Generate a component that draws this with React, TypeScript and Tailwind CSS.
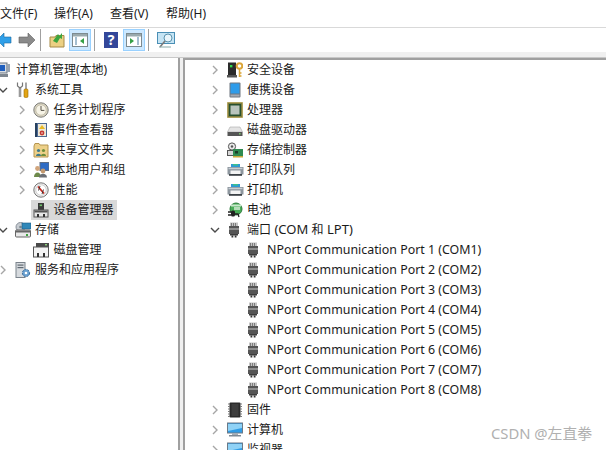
import type { ReactNode } from "react";

const FONT = '"Noto Sans", "Noto Sans CJK SC", sans-serif';

function Svg({ children, w = 16, h = 16 }: { children: ReactNode; w?: number; h?: number }) {
  return (
    <svg width={w} height={h} viewBox={`0 0 ${w} ${h}`} className="shrink-0 block">
      {children}
    </svg>
  );
}

function Chevron({ open }: { open?: boolean }) {
  return (
    <svg width="10" height="10" viewBox="0 0 10 10" className="shrink-0 block">
      {open ? (
        <path d="M1 3 L5 7 L9 3" fill="none" stroke="#4a4a4a" strokeWidth="1.4" />
      ) : (
        <path d="M3 1 L7 5 L3 9" fill="none" stroke="#a6a6a6" strokeWidth="1.4" />
      )}
    </svg>
  );
}

// tree icons
const PortIcon = () => (
  <Svg w={14} h={16}>
    <rect x="3" y="0.5" width="8" height="3.5" fill="#c4c4c4" />
    <path d="M4.5 1v3M6.5 1v3M8.5 1v3" stroke="#6a6a6a" strokeWidth="0.8" />
    <rect x="2" y="4" width="10" height="8" fill="#555" />
    <rect x="2" y="6" width="10" height="2" fill="#8e8e8e" />
    <rect x="3" y="12" width="8" height="1.5" fill="#3c3c3c" />
    <rect x="4.5" y="13.5" width="1.8" height="2" fill="#333" />
    <rect x="7.7" y="13.5" width="1.8" height="2" fill="#333" />
  </Svg>
);

const ComputerMgmt = () => (
  <Svg>
    <rect x="-3" y="1" width="14" height="10" fill="#d8dde4" stroke="#6b7480" />
    <rect x="-1" y="3" width="10" height="6" fill="#1f5fbf" />
    <rect x="10" y="2" width="4" height="8" fill="#9aa4b0" />
    <rect x="-3" y="12" width="15" height="3" fill="#7f8790" />
  </Svg>
);

const Tools = () => (
  <Svg>
    <path d="M5 5v10" stroke="#9a9a9a" strokeWidth="2.6" />
    <path d="M2.5 0.5v3.5l2.5 2 2.5-2v-3.5" fill="none" stroke="#777" strokeWidth="1.2" />
    <rect x="10" y="0.5" width="2" height="6.5" fill="#a5a5a5" />
    <rect x="9" y="7" width="4" height="8.5" rx="1.2" fill="#e2a414" stroke="#9c6d06" strokeWidth="0.6" />
  </Svg>
);

const Clock = () => (
  <Svg>
    <circle cx="8" cy="8" r="7.2" fill="#d9d4c2" stroke="#7d7d78" />
    <circle cx="8" cy="8" r="5.2" fill="#f6f3e6" stroke="#b3ad96" strokeWidth="0.6" />
    <path d="M8 4v4.4h3.4" fill="none" stroke="#58534a" strokeWidth="1" />
  </Svg>
);

const EventViewer = () => (
  <Svg>
    <rect x="2" y="1" width="12" height="14" fill="#4d6a94" />
    <rect x="2" y="1" width="2" height="14" fill="#27405f" />
    <rect x="5" y="2" width="8" height="12" fill="#efe9d6" />
    <path d="M9 3 L12 7 L6 7 Z" fill="#e8b923" />
    <circle cx="9" cy="11" r="2.4" fill="#c53a32" />
    <rect x="8.2" y="10.5" width="1.6" height="1" fill="#fff" />
  </Svg>
);

const SharedFolder = () => (
  <Svg>
    <path d="M1 4 L1 15 L15 15 L15 3 L7 3 L6 1.5 L2 1.5 Z" fill="#edd089" stroke="#b59550" />
    <circle cx="5.5" cy="8.5" r="1.6" fill="#3e7a8c" />
    <path d="M3 14c0-3 5-3 5 0z" fill="#3e7a8c" />
    <circle cx="10.5" cy="8.5" r="1.6" fill="#6d8e3c" />
    <path d="M8 14c0-3 5-3 5 0z" fill="#6d8e3c" />
  </Svg>
);

const LocalUsers = () => (
  <Svg>
    <rect x="7" y="0.5" width="9" height="8" fill="#2f6cc4" stroke="#5f6e85" />
    <circle cx="4.5" cy="6.5" r="2.4" fill="#d1a57c" />
    <path d="M1 15c0-6 7-6 7 0z" fill="#6e8a4a" />
    <circle cx="10" cy="9" r="2.4" fill="#c49a70" />
    <path d="M6 15.5c0-5 8-5 8 0z" fill="#6b6f76" />
  </Svg>
);

const Perf = () => (
  <Svg>
    <circle cx="8" cy="8" r="7.2" fill="#ececec" stroke="#777" />
    <circle cx="8" cy="8" r="5.2" fill="#fff" stroke="#bbb" strokeWidth="0.6" />
    <path d="M5 4.5 L11 11.5" stroke="#c8241c" strokeWidth="1.8" />
    <path d="M5.5 8.5 L7 4 M10.5 7.5 L9 12" stroke="#333" strokeWidth="0.9" />
  </Svg>
);

const DeviceMgr = () => (
  <Svg>
    <rect x="5" y="1" width="6" height="7" fill="#3a3a3a" />
    <rect x="6.6" y="2.5" width="2.4" height="1.6" fill="#6fc46a" />
    <rect x="1" y="8" width="14" height="7" fill="#e6e6e6" stroke="#555" />
    <rect x="1.5" y="8.5" width="13" height="2" fill="#555" />
    <rect x="4" y="12" width="2" height="3" fill="#333" />
    <rect x="10" y="12" width="2" height="3" fill="#333" />
  </Svg>
);

const Storage = () => (
  <Svg>
    <circle cx="5.5" cy="5" r="4.5" fill="#c7ccd1" stroke="#88909a" />
    <circle cx="5.5" cy="5" r="1.3" fill="#7c8791" />
    <rect x="7" y="1" width="9" height="6" fill="#2f87b8" stroke="#1a5d87" strokeWidth="0.6" />
    <rect x="0.5" y="8" width="15" height="7" rx="1" fill="#e8e8e8" stroke="#666" />
    <rect x="1" y="8.5" width="14" height="2" fill="#666" />
    <rect x="11" y="12" width="2" height="2" fill="#3da23d" />
  </Svg>
);

const DiskMgmt = () => (
  <Svg>
    <rect x="3" y="1" width="13" height="4" fill="#4a4a4a" />
    <rect x="12" y="2" width="2" height="1.4" fill="#8cd07e" />
    <rect x="0.5" y="5" width="15" height="10" fill="#f4f4f4" stroke="#555" />
    <rect x="4" y="11" width="2" height="4" fill="#333" />
    <rect x="10" y="11" width="2" height="4" fill="#333" />
  </Svg>
);

const Services = () => (
  <Svg>
    <rect x="1" y="0.5" width="9" height="15" fill="#d6dade" stroke="#7b838c" />
    <rect x="2.5" y="2.5" width="6" height="1.2" fill="#616a73" />
    <rect x="2.5" y="5" width="6" height="1.2" fill="#616a73" />
    <circle cx="11" cy="11" r="3.6" fill="#6aa0d0" stroke="#3d6f9d" strokeDasharray="2 1" />
    <circle cx="11" cy="11" r="1.3" fill="#fff" />
  </Svg>
);

const SecurityDev = () => (
  <Svg>
    <rect x="1" y="0.5" width="8" height="14" fill="#2b2b2b" />
    <rect x="3" y="3" width="2.4" height="2.4" fill="#32d84a" />
    <rect x="0" y="13" width="10" height="2.5" fill="#555" />
    <circle cx="12.5" cy="4" r="2.8" fill="none" stroke="#dba63a" strokeWidth="2" />
    <path d="M12.5 7v8M12.5 11h2M12.5 14h2" stroke="#dba63a" strokeWidth="1.5" />
  </Svg>
);

const Portable = () => (
  <Svg>
    <rect x="2.5" y="0.5" width="11" height="15" rx="1" fill="#6f7680" />
    <rect x="3.5" y="1.5" width="9" height="10" fill="#2e9cea" />
    <rect x="3.5" y="12.5" width="9" height="2" fill="#a4aab2" />
  </Svg>
);

const Cpu = () => (
  <Svg>
    <rect x="0.5" y="0.5" width="15" height="15" fill="#7d7c3e" stroke="#a78a24" strokeDasharray="1 1" />
    <rect x="2" y="2" width="12" height="12" fill="#27502f" />
    <rect x="3.5" y="3.5" width="9" height="9" fill="#b9c4bd" />
  </Svg>
);

const DiskDrive = () => (
  <Svg>
    <path d="M3 5h10l2.5 5h-15z" fill="#e4e4e4" stroke="#aaa" strokeWidth="0.6" />
    <rect x="0.5" y="10" width="15" height="4" fill="#555" />
    <rect x="12" y="11.2" width="1.6" height="1.2" fill="#7fdc6e" />
  </Svg>
);

const StorageCtl = () => (
  <Svg>
    <circle cx="5" cy="4.5" r="3.6" fill="#e8e8e8" stroke="#555" />
    <circle cx="5" cy="4.5" r="1.2" fill="#555" />
    <rect x="0.5" y="8.5" width="7" height="5" fill="#d8d8d8" stroke="#555" />
    <rect x="6" y="7" width="10" height="7" fill="#2f8a50" />
    <rect x="8" y="9" width="3" height="2.5" fill="#1a3d28" />
    <rect x="6" y="14" width="10" height="1.5" fill="#c9a83a" />
  </Svg>
);

// flat office printer: coloured sheet on top, grey body, dark tray
const Printer = () => (
  <Svg w={17} h={16}>
    <rect x="4" y="2" width="9" height="3" fill="#2f9ad6" />
    <rect x="6" y="2" width="5" height="1.5" fill="#3fc28a" />
    <rect x="0.5" y="5" width="16" height="7.5" fill="#8d969e" />
    <rect x="1.5" y="5.8" width="14" height="1.4" fill="#c6ced4" />
    <rect x="3.5" y="8.5" width="10" height="4.5" fill="#f4f4f4" />
    <rect x="2" y="12" width="13" height="1.8" fill="#3d4348" />
  </Svg>
);

const Battery = () => (
  <Svg>
    <circle cx="9" cy="7" r="6" fill="#48ad57" stroke="#2c7c3b" />
    <path d="M4 3.5h10" stroke="#c9e8cc" strokeWidth="2" />
    <path d="M7 5h6v3H7z" fill="#b5ddb9" />
    <path d="M1 10h3M1 13h3" stroke="#222" strokeWidth="1.4" />
    <rect x="4" y="8.5" width="4" height="6" rx="1.5" fill="#222" />
    <path d="M8 12h3l1 3" fill="none" stroke="#222" strokeWidth="1.3" />
  </Svg>
);

const Firmware = () => (
  <Svg>
    <rect x="2.5" y="0.5" width="11" height="15" rx="1" fill="#2a2a2a" />
    <path d="M1 2h2M1 4.5h2M1 7h2M1 9.5h2M1 12h2M1 14.5h2M13 2h2M13 4.5h2M13 7h2M13 9.5h2M13 12h2M13 14.5h2" stroke="#7b7b7b" strokeWidth="1" />
    <rect x="4.5" y="2" width="7" height="12" fill="#3d3d3d" />
  </Svg>
);

const Monitor = () => (
  <Svg>
    <rect x="0.5" y="1" width="15" height="10" fill="#2f9ce6" stroke="#6c7986" />
    <path d="M1 2h14v4L1 9z" fill="#8fd2f6" />
    <rect x="5" y="11" width="6" height="2" fill="#a4adb6" />
    <rect x="2" y="13" width="12" height="1.5" fill="#7f8a95" />
  </Svg>
);

type TreeRow = { label: string; icon: ReactNode; indent: number; arrow?: "open" | "closed"; active?: boolean };

const LEFT: TreeRow[] = [
  { label: "计算机管理(本地)", icon: <ComputerMgmt />, indent: 0 },
  { label: "系统工具", icon: <Tools />, indent: 1, arrow: "open" },
  { label: "任务计划程序", icon: <Clock />, indent: 2, arrow: "closed" },
  { label: "事件查看器", icon: <EventViewer />, indent: 2, arrow: "closed" },
  { label: "共享文件夹", icon: <SharedFolder />, indent: 2, arrow: "closed" },
  { label: "本地用户和组", icon: <LocalUsers />, indent: 2, arrow: "closed" },
  { label: "性能", icon: <Perf />, indent: 2, arrow: "closed" },
  { label: "设备管理器", icon: <DeviceMgr />, indent: 2, active: true },
  { label: "存储", icon: <Storage />, indent: 1, arrow: "open" },
  { label: "磁盘管理", icon: <DiskMgmt />, indent: 2 },
  { label: "服务和应用程序", icon: <Services />, indent: 1, arrow: "closed" },
];

const RIGHT_TOP: [string, ReactNode][] = [
  ["安全设备", <SecurityDev />],
  ["便携设备", <Portable />],
  ["处理器", <Cpu />],
  ["磁盘驱动器", <DiskDrive />],
  ["存储控制器", <StorageCtl />],
  ["打印队列", <Printer />],
  ["打印机", <Printer />],
  ["电池", <Battery />],
];

const PORTS = [1, 2, 3, 4, 5, 6, 7, 8];

function LeftRow({ row }: { row: TreeRow }) {
  if (row.indent === 0) {
    return (
      <div className="flex h-5 items-center">
        <div className="-ml-[4px]">{row.icon}</div>
        <span className="ml-[4px] text-[12px] text-[#1a1a1a]">{row.label}</span>
      </div>
    );
  }
  const isChild = row.indent === 2;
  return (
    <div className={`flex h-5 items-center ${isChild ? "pl-[17px]" : "-ml-[2px]"}`}>
      <div className={`shrink-0 ${isChild ? "w-[14px]" : "w-[16px]"}`}>
        {row.arrow && <Chevron open={row.arrow === "open"} />}
      </div>
      <div className={`flex h-5 items-center ${row.active ? "bg-[#d9d9d9]" : ""} ${isChild ? "pl-[2px] pr-[3px]" : "pl-[1px]"}`}>
        {row.icon}
        <span className={`text-[12px] text-[#1a1a1a] ${isChild ? "ml-[4.5px]" : "ml-[4px]"}`}>{row.label}</span>
      </div>
    </div>
  );
}

function RightRow({ label, icon, open }: { label: ReactNode; icon: ReactNode; open?: boolean }) {
  return (
    <div className="flex h-5 items-center pl-[25px]">
      <div className="w-[17px] shrink-0">
        <Chevron open={open} />
      </div>
      <div className="w-[16px] shrink-0">{icon}</div>
      <span className="ml-[4px] whitespace-pre text-[12px] text-[#1a1a1a]">{label}</span>
    </div>
  );
}

function ToolBtn({ children }: { children: ReactNode }) {
  return (
    <div className="flex h-[22px] w-[22px] items-center justify-center border border-[#99d1ff] bg-[#cce8ff]">
      {children}
    </div>
  );
}

const Sep = () => <div className="mx-[3px] h-[22px] w-px bg-[#a0a0a0]" />;

const Pane = ({ play }: { play: "left" | "right" }) => (
  <Svg>
    <rect x="0.5" y="1.5" width="15" height="13" fill="#fff" stroke="#7d8a8f" />
    <rect x="1" y="2" width="14" height="2.5" fill="#9aa9ad" />
    {play === "left" ? (
      <>
        <path d="M3 6h2M3 8h2M3 10h2M3 12h2" stroke="#4a7ca0" strokeWidth="1" />
        <path d="M12 6v6L8 9z" fill="#35a045" />
      </>
    ) : (
      <>
        <path d="M11 6h2M11 8h2M11 10h2M11 12h2" stroke="#4a7ca0" strokeWidth="1" />
        <path d="M4 6v6l4-3z" fill="#35a045" />
      </>
    )}
  </Svg>
);

export default function App() {
  return (
    <div className="flex h-[450px] w-[606px] flex-col overflow-hidden bg-white" style={{ fontFamily: FONT }}>
      <div className="flex h-[28px] items-center border-b border-[#d9d9d9] text-[12px] text-[#1a1a1a]">
        <span className="w-[54px]">文件(F)</span>
        <span className="w-[56px]">操作(A)</span>
        <span className="w-[56px]">查看(V)</span>
        <span>帮助(H)</span>
      </div>

      <div className="flex h-[24px] items-center">
        <svg width="12" height="16" viewBox="0 0 12 16" className="block shrink-0">
          <path d="M-3 8l7-7v4h7v6H4v4z" fill="#2f9fe8" stroke="#17689f" strokeWidth="0.6" />
        </svg>
        <svg width="18" height="16" viewBox="0 0 18 16" className="ml-[6px] block shrink-0">
          <path d="M17 8l-7-7v4H1v6h9v4z" fill="#8a8a8a" stroke="#5e5e5e" strokeWidth="0.6" />
        </svg>
        <div className="mx-[4px] h-[22px] w-px bg-[#a0a0a0]" />
        <div className="ml-[4px] flex items-center gap-[4px]">
          <Svg>
            <path d="M1 5h5l1-1.5h8V15H1z" fill="#ecd083" stroke="#a68a46" />
            <path d="M4 9l5-7 1.5 2L13 1v6l-2-1-3 5z" fill="#3ea53e" />
          </Svg>
          <ToolBtn>
            <Pane play="left" />
          </ToolBtn>
        </div>
        <Sep />
        <div className="ml-[6px] flex items-center gap-[5px]">
          <div className="flex h-[16px] w-[14px] items-center justify-center bg-[#33479a] text-[14px] font-bold leading-none text-white">?</div>
          <ToolBtn>
            <Pane play="right" />
          </ToolBtn>
        </div>
        <Sep />
        <svg width="18" height="17" viewBox="0 0 18 17" className="ml-[5px] block shrink-0">
          <rect x="0.5" y="0.5" width="17" height="11" fill="#c5e4f4" stroke="#4a8fb5" />
          <circle cx="11" cy="6" r="4" fill="#e8f5fb" stroke="#5b93ae" />
          <path d="M8 9l-5 6" stroke="#7a7a7a" strokeWidth="1.6" />
          <path d="M2 15h12" stroke="#8aa" strokeWidth="1" />
        </svg>
      </div>

      <div className="h-[6px] border-b border-[#c8c8c8] bg-[#f0f0f0]" />

      <div className="flex min-h-0 flex-1">
        <div className="w-[180px] shrink-0 overflow-hidden border-r-2 border-[#a0a0a0] pt-[2px]">
          {LEFT.map((row) => (
            <LeftRow key={row.label} row={row} />
          ))}
        </div>
        <div className="w-[3px] shrink-0 bg-[#f0f0f0]" />
        <div className="relative min-w-0 flex-1 overflow-hidden border-l-2 border-t-2 border-[#a0a0a0]">
          {RIGHT_TOP.map(([label, icon]) => (
            <RightRow key={label} label={label} icon={icon} />
          ))}
          <RightRow
            label={
              <>
                端口<span className="text-[13px]"> (COM </span>和<span className="text-[13px]"> LPT)</span>
              </>
            }
            icon={<PortIcon />}
            open
          />
          {PORTS.map((n) => (
            <div key={n} className="flex h-5 items-center pl-[61px]">
              <PortIcon />
              <span className="ml-[7px] text-[12.4px] text-[#1a1a1a]">{`NPort Communication Port ${n} (COM${n})`}</span>
            </div>
          ))}
          <RightRow label="固件" icon={<Firmware />} />
          <RightRow label="计算机" icon={<Monitor />} />
          <RightRow label="监视器" icon={<Monitor />} />
          <div className="absolute bottom-[6px] right-[14px] text-[14.8px] text-[#b0b0b0]">CSDN @左直拳</div>
        </div>
      </div>
    </div>
  );
}
